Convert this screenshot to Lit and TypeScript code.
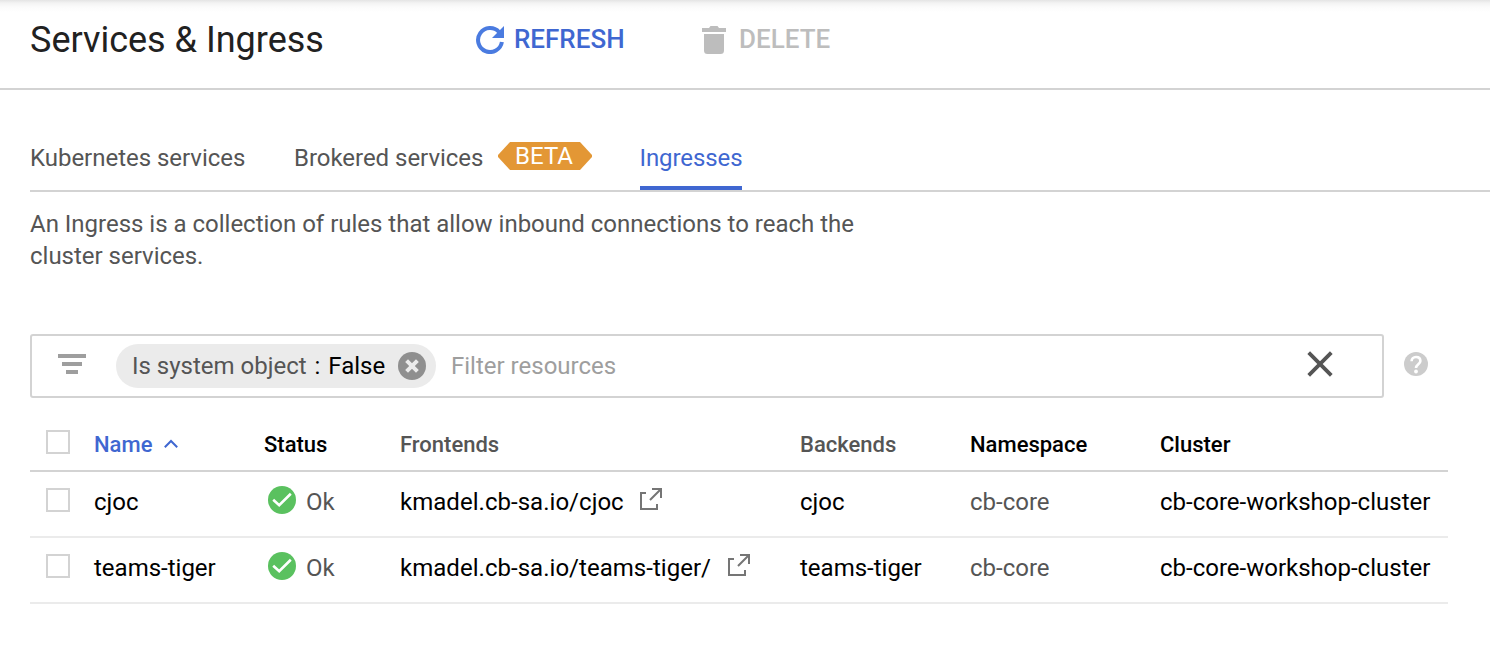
import { LitElement, html, css, svg } from "lit";
import { customElement, property } from "lit/decorators.js";

interface Ingress {
  name: string;
  frontend: string;
  backend: string;
  namespace: string;
  cluster: string;
}

const rows: Ingress[] = [
  { name: "cjoc", frontend: "kmadel.cb-sa.io/cjoc", backend: "cjoc", namespace: "cb-core", cluster: "cb-core-workshop-cluster" },
  { name: "teams-tiger", frontend: "kmadel.cb-sa.io/teams-tiger/", backend: "teams-tiger", namespace: "cb-core", cluster: "cb-core-workshop-cluster" },
];

const shapes = {
  refresh: { w: 28, h: 28, body: svg`<path d="M25.9 16A12 12 0 1 1 23 6" fill="none" stroke="currentColor" stroke-width="4"/><path d="M28 0v12H16z" fill="currentColor"/>` },
  trash: { w: 24, h: 28, body: svg`<path d="M0 2h7l1.500-2h7L17 2h7v4H0zM2 8h20v16.500a3.500 3.500 0 0 1-3.500 3.500h-13A3.500 3.500 0 0 1 2 24.500z" fill="currentColor"/>` },
  filter: { w: 28, h: 20, body: svg`<path d="M0 0h28v4H0zM4 8h20v4H4zM8 16h12v4H8z" fill="currentColor"/>` },
  remove: { w: 28, h: 28, body: svg`<circle cx="14" cy="14" r="14" fill="currentColor"/><path d="M8.600 8.600l10.800 10.800M19.400 8.600L8.600 19.400" stroke="#ebebeb" stroke-width="4"/>` },
  clear: { w: 26, h: 26, body: svg`<path d="M1.700 1.700l22.600 22.600M24.300 1.700L1.700 24.300" stroke="currentColor" stroke-width="3.800"/>` },
  help: { w: 24, h: 24, body: svg`<circle cx="12" cy="12" r="12" fill="currentColor"/><path d="M7.600 9.200C7.600 6.700 9.400 5 12 5s4.400 1.600 4.400 4c0 3-4.400 3.600-4.400 7" fill="none" stroke="#fff" stroke-width="2.600"/><circle cx="12" cy="19.500" r="1.900" fill="#fff"/>` },
  caret: { w: 14, h: 10, body: svg`<path d="M.8 8.200L7 2l6.200 6.200" fill="none" stroke="currentColor" stroke-width="2"/>` },
  ok: { w: 28, h: 28, body: svg`<circle cx="14" cy="14" r="14" fill="currentColor"/><path d="M5.200 13.700l6 5.500L22.800 7.800" fill="none" stroke="#fff" stroke-width="2.600"/>` },
  external: { w: 22, h: 22, body: svg`<path d="M6 5H1v16h16v-5M12 1h9v9M21 1L10 12" fill="none" stroke="currentColor" stroke-width="2"/>` },
};

@customElement("ui-icon")
class UiIcon extends LitElement {
  @property() name: keyof typeof shapes = "ok";
  static styles = css`
    :host { display: block; flex: none; }
    svg { display: block; }
  `;
  render() {
    const s = shapes[this.name];
    return html`<svg width=${s.w} height=${s.h} viewBox="0 0 ${s.w} ${s.h}" aria-hidden="true">${s.body}</svg>`;
  }
}

@customElement("app-root")
class AppRoot extends LitElement {
  static styles = css`
    :host {
      display: block;
      height: 664px;
      overflow: hidden;
      background: #fff;
      color: #000;
      font: 24px/32px Roboto, sans-serif;
      white-space: nowrap;
    }
    * { box-sizing: border-box; }
    .header {
      display: flex;
      align-items: center;
      height: 90px;
      padding: 0 0 8px 30px;
      border-bottom: 2px solid #d3d3d3;
      background: linear-gradient(#e4e4e4 0, #f3f3f3 3px, #fbfbfb 7px, #fff 12px) no-repeat;
    }
    .title { width: 446px; margin: 0; font-size: 36px; font-weight: 400; line-height: 44px; color: #212121; }
    .action { display: flex; align-items: center; font-size: 26px; font-weight: 500; line-height: 32px; }
    .action span { padding-bottom: 2px; }
    .refresh { width: 226px; gap: 10px; color: #3f67d1; }
    .refresh ui-icon { color: #4a7be0; }
    .delete { gap: 13px; color: #bdbdbd; }
    .tabs {
      display: flex;
      height: 102px;
      margin-left: 30px;
      padding-top: 52px;
      border-bottom: 2px solid #d3d3d3;
      color: #555;
      letter-spacing: -0.03px;
    }
    .tab { display: flex; height: 48px; }
    .kube { width: 264px; }
    .brokered { width: 346px; }
    .beta {
      width: 94px;
      height: 28px;
      margin-left: auto;
      margin-right: 48px;
      padding-right: 2px;
      background: #e39735;
      clip-path: polygon(0 46%, 0 54%, 12px 100%, 82px 100%, 100% 54%, 100% 46%, 82px 0, 12px 0);
      color: #fff;
      line-height: 28px;
      text-align: center;
    }
    .active { width: 102px; color: #3f67d1; border-bottom: 4px solid #3f67d1; letter-spacing: -0.08px; }
    .active .text { margin-left: -0.5px; }
    .text { line-height: 32px; }
    .description { width: 840px; margin: 16px 0 0 30px; color: #555; white-space: normal; letter-spacing: -0.01px; }
    .filter-row { display: flex; align-items: center; gap: 20px; margin: 62px 0 0 30px; }
    .filter {
      display: flex;
      align-items: center;
      width: 1354px;
      height: 64px;
      padding: 0 49px 0 26px;
      border: 2px solid #d3d3d3;
      border-radius: 3px;
    }
    .glyph { color: #9e9e9e; padding-bottom: 4px; }
    .chip {
      display: flex;
      align-items: center;
      width: 320px;
      height: 44px;
      margin-left: 30px;
      padding: 0 10px 0 16px;
      border-radius: 22px;
      background: #ebebeb;
    }
    .key { color: #555; }
    .colon { margin: 0 2px; }
    .chip ui-icon { margin-left: auto; color: #8f8f8f; }
    .placeholder { flex: 1; margin-left: 15px; color: #9e9e9e; }
    .clear { color: #555; padding-bottom: 4px; }
    .help { color: #cccccc; padding-bottom: 4px; }
    .table { width: 1418px; margin: 18px 0 0 30px; }
    .row {
      display: grid;
      grid-template-columns: 64px 170px 136px 400px 170px 190px 1fr;
      align-items: center;
      height: 66px;
      padding-bottom: 8px;
      border-bottom: 2px solid #ebebeb;
    }
    .row > div { padding-top: 4px; }
    .head {
      height: 56px;
      padding-bottom: 2px;
      border-bottom-color: #d3d3d3;
      font-size: 22px;
      font-weight: 500;
    }
    .head > div { padding-top: 6px; }
    .row .box-cell { padding-top: 0; }
    .head .sorted { display: flex; align-items: center; gap: 12px; color: #3f67d1; }
    .sorted ui-icon { padding-bottom: 2px; }
    .muted { color: #555; }
    .box { width: 24px; height: 24px; margin-left: 16px; border: 2px solid #d3d3d3; background: #fff; }
    .row .status { display: flex; align-items: center; gap: 10px; padding: 0 0 0 4px; color: #555; }
    .status ui-icon { color: #5ac15f; }
    .status span { padding-top: 4px; }
    .row .frontend { display: flex; align-items: center; gap: 16.600px; padding: 0; letter-spacing: 0.03px; }
    .frontend span { padding-top: 4px; }
    .frontend ui-icon { color: #757575; padding-bottom: 2px; }
  `;

  render() {
    return html`
      <header class="header">
        <h1 class="title">Services &amp; Ingress</h1>
        <div class="action refresh"><ui-icon name="refresh"></ui-icon><span>REFRESH</span></div>
        <div class="action delete"><ui-icon name="trash"></ui-icon><span>DELETE</span></div>
      </header>
      <nav class="tabs">
        <div class="tab kube"><span class="text">Kubernetes services</span></div>
        <div class="tab brokered"><span class="text">Brokered services</span><span class="beta">BETA</span></div>
        <div class="tab active"><span class="text">Ingresses</span></div>
      </nav>
      <p class="description">An Ingress is a collection of rules that allow inbound connections to reach the cluster services.</p>
      <div class="filter-row">
        <div class="filter">
          <ui-icon class="glyph" name="filter"></ui-icon>
          <div class="chip">
            <span><span class="key">Is system object</span> <span class="colon">:</span> False</span>
            <ui-icon name="remove"></ui-icon>
          </div>
          <span class="placeholder">Filter resources</span>
          <ui-icon class="clear" name="clear"></ui-icon>
        </div>
        <ui-icon class="help" name="help"></ui-icon>
      </div>
      <div class="table">
        <div class="row head">
          <div class="box-cell"><div class="box"></div></div>
          <div class="sorted"><span>Name</span><ui-icon name="caret"></ui-icon></div>
          <div>Status</div>
          <div class="muted">Frontends</div>
          <div class="muted">Backends</div>
          <div>Namespace</div>
          <div>Cluster</div>
        </div>
        ${rows.map(
          (r) => html`
            <div class="row">
              <div class="box-cell"><div class="box"></div></div>
              <div>${r.name}</div>
              <div class="status"><ui-icon name="ok"></ui-icon><span>Ok</span></div>
              <div class="frontend"><span>${r.frontend}</span><ui-icon name="external"></ui-icon></div>
              <div>${r.backend}</div>
              <div class="muted">${r.namespace}</div>
              <div>${r.cluster}</div>
            </div>
          `
        )}
      </div>
    `;
  }
}
